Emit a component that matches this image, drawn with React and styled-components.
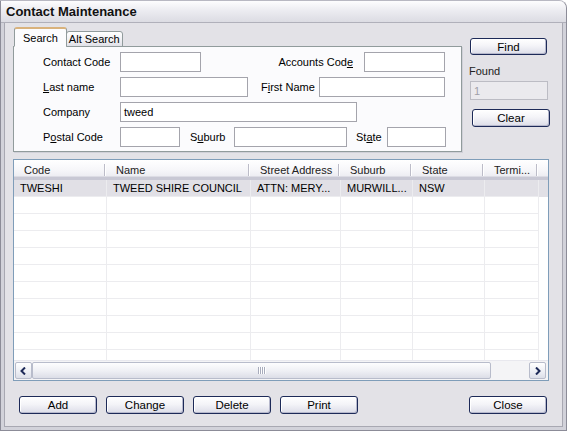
import React from 'react';
import styled, { createGlobalStyle } from 'styled-components';

const GlobalStyle = createGlobalStyle`
  html, body {
    margin: 0;
    padding: 0;
    background: #ffffff;
  }
  body {
    font-family: 'Liberation Sans', Arial, sans-serif;
    font-size: 11px;
    color: #000;
  }
`

const Window = styled.div`
  width: 567px;
  height: 431px;
  box-sizing: border-box;
  display: flex;
  flex-direction: column;
  background: #e3e2e7;
  border: 1px solid #8c8c98;
  border-top-color: #b8b8c2;
  border-top-right-radius: 8px;
  overflow: hidden;
`

const TitleBar = styled.div`
  height: 21px;
  flex: none;
  display: flex;
  align-items: center;
  padding-left: 5px;
  background: linear-gradient(#fdfdfe, #ececf1 45%, #dcdce3);
  border-bottom: 1px solid #b0b0ba;
  font-size: 13px;
  font-weight: bold;
  color: #111;
`

const Frame = styled.div`
  flex: 1;
  display: flex;
  flex-direction: column;
  padding: 5px 13px 0 9px;
  border-left: 3px solid #d2d2da;
  border-right: 3px solid #d2d2da;
  border-bottom: 3px solid #d2d2da;
  box-shadow: inset 1px 0 0 #a8a8b2, inset -1px 0 0 #a8a8b2, inset 0 -1px 0 #a8a8b2;
`

const TopSection = styled.div`
  display: flex;
  gap: 7px;
`

const TabArea = styled.div`
  width: 450px;
  display: flex;
  flex-direction: column;
`

const TabStrip = styled.div`
  display: flex;
  align-items: flex-end;
  height: 19px;
  padding-left: 1px;
  position: relative;
  z-index: 1;
  margin-bottom: -1px;
`

const Tab = styled.div`
  box-sizing: border-box;
  height: ${p => (p.active ? '20px' : '16px')};
  padding: 0 ${p => (p.active ? '8px' : '2px')};
  display: flex;
  align-items: center;
  border: 1px solid #919b9c;
  border-bottom: ${p => (p.active ? '1px solid #fcfcfe' : '1px solid #919b9c')};
  border-top: ${p => (p.active ? '2px solid #d9b27c' : '1px solid #919b9c')};
  border-radius: 3px 3px 0 0;
  margin-left: ${p => (p.active ? '0' : '-1px')};
  background: ${p => (p.active ? '#fcfcfe' : 'linear-gradient(#ffffff, #ececf1 70%, #e0e0e7)')};
  font-size: 11px;
`

const TabPanel = styled.div`
  box-sizing: border-box;
  height: 106px;
  border: 1px solid #919b9c;
  background: #fbfbfd;
  padding: 5px 0 0 29px;
  display: flex;
  flex-direction: column;
  gap: 5px;
  box-shadow: 1px 1px 0 #d0d0d8;
`

const FormRow = styled.div`
  display: flex;
  align-items: center;
  height: 20px;
`

const Label = styled.label`
  box-sizing: border-box;
  width: ${p => p.w}px;
  flex: none;
  text-align: ${p => (p.right ? 'right' : 'left')};
  padding-left: ${p => p.pl || 0}px;
  padding-right: ${p => p.pr || 0}px;
  white-space: nowrap;
  font-size: 11px;
`

const Input = styled.div`
  box-sizing: border-box;
  width: ${p => p.w}px;
  height: ${p => p.h || 20}px;
  margin-left: ${p => p.ml || 0}px;
  flex: none;
  border: 1px solid ${p => (p.disabled ? '#bcbcc4' : '#a4a4ac')};
  background: ${p => (p.disabled ? '#ebeaee' : '#ffffff')};
  color: ${p => (p.disabled ? '#a0a0a8' : '#000')};
  padding-left: 3px;
  display: flex;
  align-items: center;
  font-size: 11px;
`

const SidePanel = styled.div`
  display: flex;
  flex-direction: column;
  padding-top: 10px;
`

const FoundLabel = styled.div`
  margin: 10px 0 3px 0;
  height: 13px;
  font-size: 11px;
  color: #222;
`

const Button = styled.button`
  box-sizing: border-box;
  width: ${p => p.w || 78}px;
  height: ${p => p.h || 18}px;
  margin-left: ${p => p.ml || 0}px;
  margin-right: ${p => p.mr || 0}px;
  margin-top: ${p => p.mt || 0}px;
  padding: 0;
  border: 1px solid #1d2a58;
  border-radius: 3px;
  background: linear-gradient(#ffffff, #f4f4f8 45%, #dcdde8);
  box-shadow: inset -1px -1px 0 #b6b8cc, inset 1px 1px 0 #ffffff;
  font-family: 'Liberation Sans', Arial, sans-serif;
  font-size: 11.5px;
  color: #000;
  cursor: pointer;
`

const ListView = styled.div`
  box-sizing: border-box;
  margin-top: 7px;
  width: 536px;
  height: 222px;
  border: 1px solid #7f9db9;
  background: #ffffff;
  display: flex;
  flex-direction: column;
  overflow: hidden;
`

const cols = '93px 144px 90px 72px 72px 54px 1fr';

const HeaderRow = styled.div`
  display: grid;
  grid-template-columns: ${cols};
  height: 17px;
  flex: none;
  background: linear-gradient(#ffffff, #f6f6f9 60%, #ececf1);
  border-bottom: 3px solid #c8c8d4;
  box-shadow: 0 -1px 0 #dcdce4 inset;
`

const HeaderCell = styled.div`
  position: relative;
  display: flex;
  align-items: center;
  padding-left: ${p => p.pl || 9}px;
  padding-top: 3px;
  white-space: nowrap;
  overflow: hidden;
  color: #222;
  font-size: 11px;

  &::after {
    content: '';
    display: ${p => (p.last ? 'none' : 'block')};
    position: absolute;
    right: 2px;
    top: 4px;
    bottom: 1px;
    width: 1px;
    background: #bcbcc8;
    box-shadow: 1px 0 0 #ffffff;
  }
`

const Rows = styled.div`
  flex: 1;
  overflow: hidden;
`

const Row = styled.div`
  display: grid;
  grid-template-columns: ${cols};
  height: 17px;
  background: ${p => (p.selected ? '#e1e0e6' : 'transparent')};
`

const Cell = styled.div`
  box-sizing: border-box;
  display: flex;
  align-items: center;
  padding-left: 6px;
  white-space: nowrap;
  overflow: hidden;
  border-bottom: ${p => (p.blank ? 'none' : '1px solid #ececef')};
  border-right: ${p => (p.blank ? 'none' : '1px solid #ececef')};
  font-size: 11px;
`

const ScrollBar = styled.div`
  flex: none;
  height: 17px;
  display: flex;
  align-items: stretch;
  padding: 1px 2px 1px 1px;
  background: #f4f4f6;
  border-top: 1px solid #e8e8ee;
`

const ArrowButton = styled.div`
  box-sizing: border-box;
  width: 17px;
  flex: none;
  display: flex;
  align-items: center;
  justify-content: center;
  border: 1px solid #b8bccb;
  border-radius: 2px;
  background: linear-gradient(#ffffff, #eceef4 60%, #dcdfe8);
`

const Track = styled.div`
  flex: 1;
  display: flex;
  padding-right: 38px;
`

const Thumb = styled.div`
  box-sizing: border-box;
  flex: 1;
  border: 1px solid #b8bccb;
  border-radius: 2px;
  background: linear-gradient(#fdfdfe, #eeeff4 55%, #dcdee7);
  display: flex;
  align-items: center;
  justify-content: center;
`

const Grip = styled.div`
  width: 8px;
  height: 7px;
  background: repeating-linear-gradient(90deg, #a8acbc 0 1px, #ffffff 1px 2px);
`

const ButtonBar = styled.div`
  display: flex;
  align-items: center;
  margin-top: 15px;
  padding-left: 6px;
  gap: 9px;
`

const Spacer = styled.div`
  flex: 1;
`

const Chevron = ({ dir }) => (
  <svg width="7" height="8" viewBox="0 0 7 8">
    <polyline
      points={dir === 'left' ? '5,0.5 1.5,4 5,7.5' : '2,0.5 5.5,4 2,7.5'}
      fill="none"
      stroke="#1d2a58"
      strokeWidth="2"
    />
  </svg>
);

const columns = [
  { title: 'Code', pl: 10 },
  { title: 'Name' },
  { title: 'Street Address' },
  { title: 'Suburb' },
  { title: 'State' },
  { title: 'Termi...' },
];

const data = [
  ['TWESHI', 'TWEED SHIRE COUNCIL', 'ATTN: MERY...', 'MURWILL...', 'NSW', ''],
];

const App = () => {
  const emptyRows = Array.from({ length: 10 });

  return (
    <>
      <GlobalStyle />
      <Window>
        <TitleBar>Contact Maintenance</TitleBar>
        <Frame>
          <TopSection>
            <TabArea>
              <TabStrip>
                <Tab active>Search</Tab>
                <Tab>Alt Search</Tab>
              </TabStrip>
              <TabPanel>
                <FormRow>
                  <Label w={77}>Contact Code</Label>
                  <Input w={81} />
                  <Label w={163} right pr={11}>Accounts Cod<u>e</u></Label>
                  <Input w={81} />
                </FormRow>
                <FormRow>
                  <Label w={77}><u>L</u>ast name</Label>
                  <Input w={128} />
                  <Label w={71} pl={13}>F<u>i</u>rst Name</Label>
                  <Input w={126} />
                </FormRow>
                <FormRow>
                  <Label w={77}>Company</Label>
                  <Input w={237}>tweed</Input>
                </FormRow>
                <FormRow>
                  <Label w={77}>P<u>o</u>stal Code</Label>
                  <Input w={60} />
                  <Label w={54} pl={10}>S<u>u</u>burb</Label>
                  <Input w={113} />
                  <Label w={40} pl={9}>St<u>a</u>te</Label>
                  <Input w={59} />
                </FormRow>
              </TabPanel>
            </TabArea>
            <SidePanel>
              <Button w={77} h={17} ml={1}>Find</Button>
              <FoundLabel>Found</FoundLabel>
              <Input w={78} h={19} ml={1} disabled>1</Input>
              <Button w={78} ml={3} mt={9}>Clear</Button>
            </SidePanel>
          </TopSection>

          <ListView>
            <HeaderRow>
              {columns.map(c => (
                <HeaderCell key={c.title} pl={c.pl}>{c.title}</HeaderCell>
              ))}
              <HeaderCell last />
            </HeaderRow>
            <Rows>
              {data.map(r => (
                <Row key={r[0]} selected>
                  {r.map((v, i) => <Cell key={i}>{v}</Cell>)}
                  <Cell blank />
                </Row>
              ))}
              {emptyRows.map((_, idx) => (
                <Row key={idx}>
                  {columns.map((c, i) => <Cell key={i} />)}
                  <Cell blank />
                </Row>
              ))}
            </Rows>
            <ScrollBar>
              <ArrowButton><Chevron dir="left" /></ArrowButton>
              <Track>
                <Thumb><Grip /></Thumb>
              </Track>
              <ArrowButton><Chevron dir="right" /></ArrowButton>
            </ScrollBar>
          </ListView>

          <ButtonBar>
            <Button>Add</Button>
            <Button>Change</Button>
            <Button>Delete</Button>
            <Button>Print</Button>
            <Spacer />
            <Button mr={3}>Close</Button>
          </ButtonBar>
        </Frame>
      </Window>
    </>
  );
};

export default App;
